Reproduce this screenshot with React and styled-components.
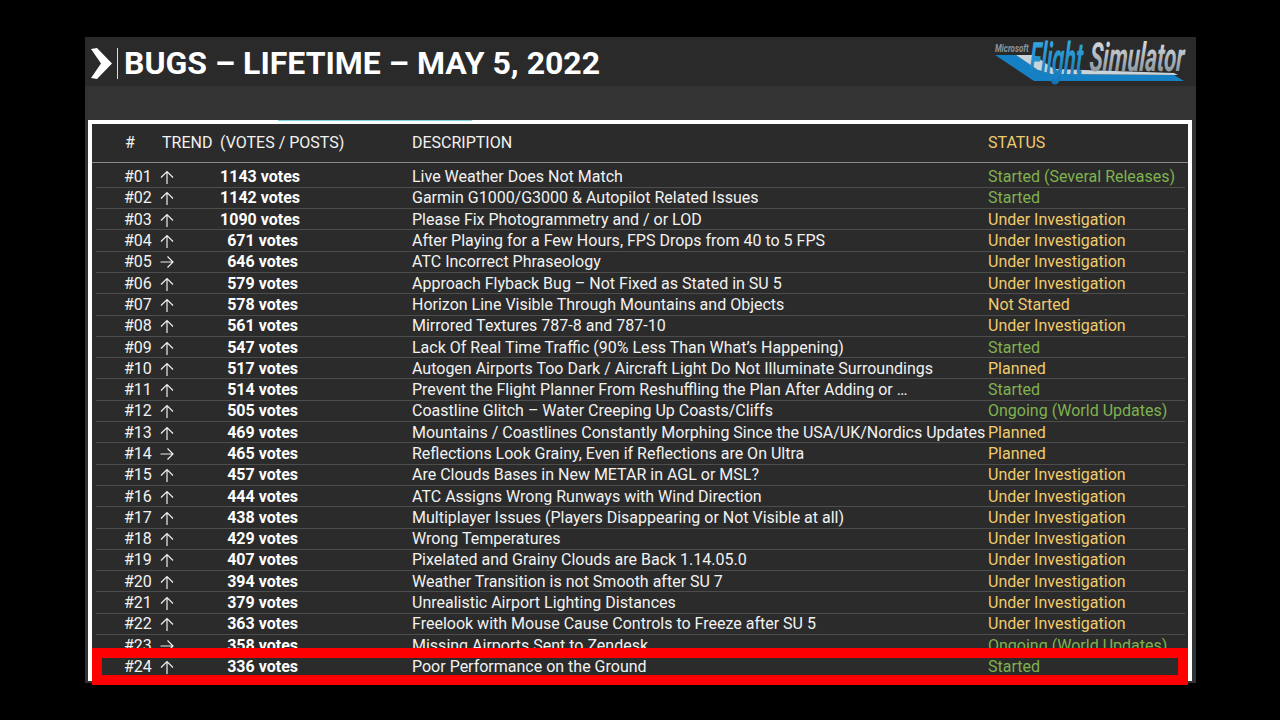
import React from 'react';
import styled, { createGlobalStyle } from 'styled-components';

const Global = createGlobalStyle`
  html, body {
    margin: 0;
    background: #000;
    font-family: Roboto, "Liberation Sans", sans-serif;
  }
`;

const Page = styled.div`
  width: 1280px;
  height: 720px;
  overflow: hidden;
  padding: 37px 0 0 85px;
  box-sizing: border-box;
`;

const Slide = styled.section`
  width: 1111px;
  height: 646px;
  background: #333;
  display: flex;
  flex-direction: column;
`;

const Header = styled.header`
  height: 49px;
  flex: none;
  background: #2a2a2a;
  display: flex;
  align-items: center;
  padding: 0 10px 0 6px;
`;

const Chevron = styled.svg`
  flex: none;
  margin-top: 3px;
`;

const Divider = styled.div`
  width: 1px;
  height: 31px;
  background: #ddd;
  margin: 3px 6px 0 5px;
`;

const Title = styled.h1`
  margin: 2px 0 0;
  color: #fff;
  font-size: 32px;
  font-weight: 700;
  line-height: 44px;
  white-space: nowrap;
`;

const Logo = styled.svg`
  margin-left: auto;
  flex: none;
  overflow: visible;
`;

const Frame = styled.div`
  flex: 1;
  margin: 34px 4px 3px 3px;
  background: #2b2b2b;
  border: 3px solid #fff;
  border-width: 4px 4px 3px 4px;
  position: relative;
`;

const Glint = styled.div`
  position: absolute;
  top: -4px;
  left: 186px;
  width: 194px;
  height: 1px;
  background: #7fd0e0;
`;

const Row = styled.div`
  display: grid;
  grid-template-columns: 37px 58px 80px 112px 576px 1fr;
  align-items: center;
  height: 21.3px;
  margin: 0 3px 0 4px;
  padding-left: 29px;
  font-size: 16px;
  color: #f2f2f2;
  white-space: nowrap;
  border-bottom: ${p => (p.$last ? '0' : '1px solid #4d4d4d')};
  box-sizing: border-box;
`;

const HeadRow = styled(Row)`
  height: 39px;
  margin: 0 0 3.5px;
  padding: 0 0 1px 33px;
  border-bottom: 1px solid #8a8a8a;
`;

const Index = styled.span`
  margin-left: -1px;
`;

const HeadVotes = styled.span`
  grid-column: 3 / 5;
`;

const Votes = styled.span`
  font-weight: 700;
  color: #fff;
  text-align: right;
  padding-right: ${p => (p.$short ? '2px' : '0')};
`;

const Description = styled.span`
  grid-column: 5;
`;

const Status = styled.span`
  grid-column: 6;
  color: ${p => p.$color};
`;

const ArrowIcon = styled.svg`
  display: block;
  margin: 1px 0 0 -2px;
`;

const Highlight = styled.div`
  position: absolute;
  left: 0;
  right: 0;
  top: 524px;
  height: 37px;
  border: 10px solid #fe0000;
  box-sizing: border-box;
`;

const GREEN = '#7fb24f';
const YELLOW = '#efcb6e';

const statusColors = {
  'Started (Several Releases)': GREEN,
  Started: GREEN,
  'Ongoing (World Updates)': GREEN,
};

const rows = [
  ['1143', 'up', 'Live Weather Does Not Match', 'Started (Several Releases)'],
  ['1142', 'up', 'Garmin G1000/G3000 & Autopilot Related Issues', 'Started'],
  ['1090', 'up', 'Please Fix Photogrammetry and / or LOD', 'Under Investigation'],
  ['671', 'up', 'After Playing for a Few Hours, FPS Drops from 40 to 5 FPS', 'Under Investigation'],
  ['646', 'right', 'ATC Incorrect Phraseology', 'Under Investigation'],
  ['579', 'up', 'Approach Flyback Bug – Not Fixed as Stated in SU 5', 'Under Investigation'],
  ['578', 'up', 'Horizon Line Visible Through Mountains and Objects', 'Not Started'],
  ['561', 'up', 'Mirrored Textures 787-8 and 787-10', 'Under Investigation'],
  ['547', 'up', 'Lack Of Real Time Traffic (90% Less Than What’s Happening)', 'Started'],
  ['517', 'up', 'Autogen Airports Too Dark / Aircraft Light Do Not Illuminate Surroundings', 'Planned'],
  ['514', 'up', 'Prevent the Flight Planner From Reshuffling the Plan After Adding or …', 'Started'],
  ['505', 'up', 'Coastline Glitch – Water Creeping Up Coasts/Cliffs', 'Ongoing (World Updates)'],
  ['469', 'up', 'Mountains / Coastlines Constantly Morphing Since the USA/UK/Nordics Updates', 'Planned'],
  ['465', 'right', 'Reflections Look Grainy, Even if Reflections are On Ultra', 'Planned'],
  ['457', 'up', 'Are Clouds Bases in New METAR in AGL or MSL?', 'Under Investigation'],
  ['444', 'up', 'ATC Assigns Wrong Runways with Wind Direction', 'Under Investigation'],
  ['438', 'up', 'Multiplayer Issues (Players Disappearing or Not Visible at all)', 'Under Investigation'],
  ['429', 'up', 'Wrong Temperatures', 'Under Investigation'],
  ['407', 'up', 'Pixelated and Grainy Clouds are Back 1.14.05.0', 'Under Investigation'],
  ['394', 'up', 'Weather Transition is not Smooth after SU 7', 'Under Investigation'],
  ['379', 'up', 'Unrealistic Airport Lighting Distances', 'Under Investigation'],
  ['363', 'up', 'Freelook with Mouse Cause Controls to Freeze after SU 5', 'Under Investigation'],
  ['358', 'right', 'Missing Airports Sent to Zendesk', 'Ongoing (World Updates)'],
  ['336', 'up', 'Poor Performance on the Ground', 'Started'],
];

function Arrow({ dir }) {
  return (
    <ArrowIcon width="14" height="14" viewBox="0 0 14 14" fill="none" stroke="#eee" strokeWidth="1.2">
      {dir === 'up'
        ? <path d="M7 14V1.5M1 7.5L7 1.5L13 7.5" />
        : <path d="M0.5 7H13M7.5 1.5L13 7L7.5 12.5" />}
    </ArrowIcon>
  );
}

function FsLogo() {
  return (
    <Logo width="192" height="44" viewBox="0 0 192 44">
      <defs>
        <linearGradient id="blue" x1="0" y1="0" x2="0" y2="1">
          <stop offset="0" stopColor="#38b2ea" />
          <stop offset="1" stopColor="#0f6fb0" />
        </linearGradient>
        <linearGradient id="grey" x1="0" y1="0" x2="0" y2="1">
          <stop offset="0" stopColor="#e6eaec" />
          <stop offset="1" stopColor="#77838c" />
        </linearGradient>
      </defs>
      <path d="M1 15L22 15L46 31L60 34L180 35L190 41L40 41Z" fill="#1580c4" />
      <path d="M22 15L40 15L60 29L180 33L184 35L58 34L44 30Z" fill="#c9d3da" />
      <text transform="translate(1 12) scale(0.8 1)" fontSize="10" fontStyle="italic" fontWeight="700" fill="#8d9499" fontFamily="Roboto, sans-serif">Microsoft</text>
      <text transform="translate(35 35) scale(0.47 1) skewX(-6)" fontSize="46" fontStyle="italic" fontWeight="700" fill="url(#blue)" fontFamily="Roboto, sans-serif">Flight</text>
      <text transform="translate(95 31) scale(0.56 1) skewX(-6)" fontSize="40" fontStyle="italic" fontWeight="700" fill="url(#grey)" fontFamily="Roboto, sans-serif">Simulator</text>
    </Logo>
  );
}

export default function App() {
  return (
    <Page>
      <Global />
      <Slide>
        <Header>
          <Chevron width="21" height="31" viewBox="0 0 21 31">
            <path d="M0 1L6 0L21 15.5L6 31L0 30L10 15.5Z" fill="#fff" />
          </Chevron>
          <Divider />
          <Title>BUGS – LIFETIME – MAY 5, 2022</Title>
          <FsLogo />
        </Header>
        <Frame>
          <Glint />
          <HeadRow>
            <span>#</span>
            <span>TREND</span>
            <HeadVotes>(VOTES / POSTS)</HeadVotes>
            <Description>DESCRIPTION</Description>
            <Status $color={YELLOW}>STATUS</Status>
          </HeadRow>
          {rows.map(([votes, dir, desc, status], i) => (
            <Row key={i} $last={i === rows.length - 1}>
              <Index>#{String(i + 1).padStart(2, '0')}</Index>
              <Arrow dir={dir} />
              <Votes $short={votes.length === 3}>{votes} votes</Votes>
              <Description>{desc}</Description>
              <Status $color={statusColors[status] || YELLOW}>{status}</Status>
            </Row>
          ))}
          <Highlight />
        </Frame>
      </Slide>
    </Page>
  );
}
